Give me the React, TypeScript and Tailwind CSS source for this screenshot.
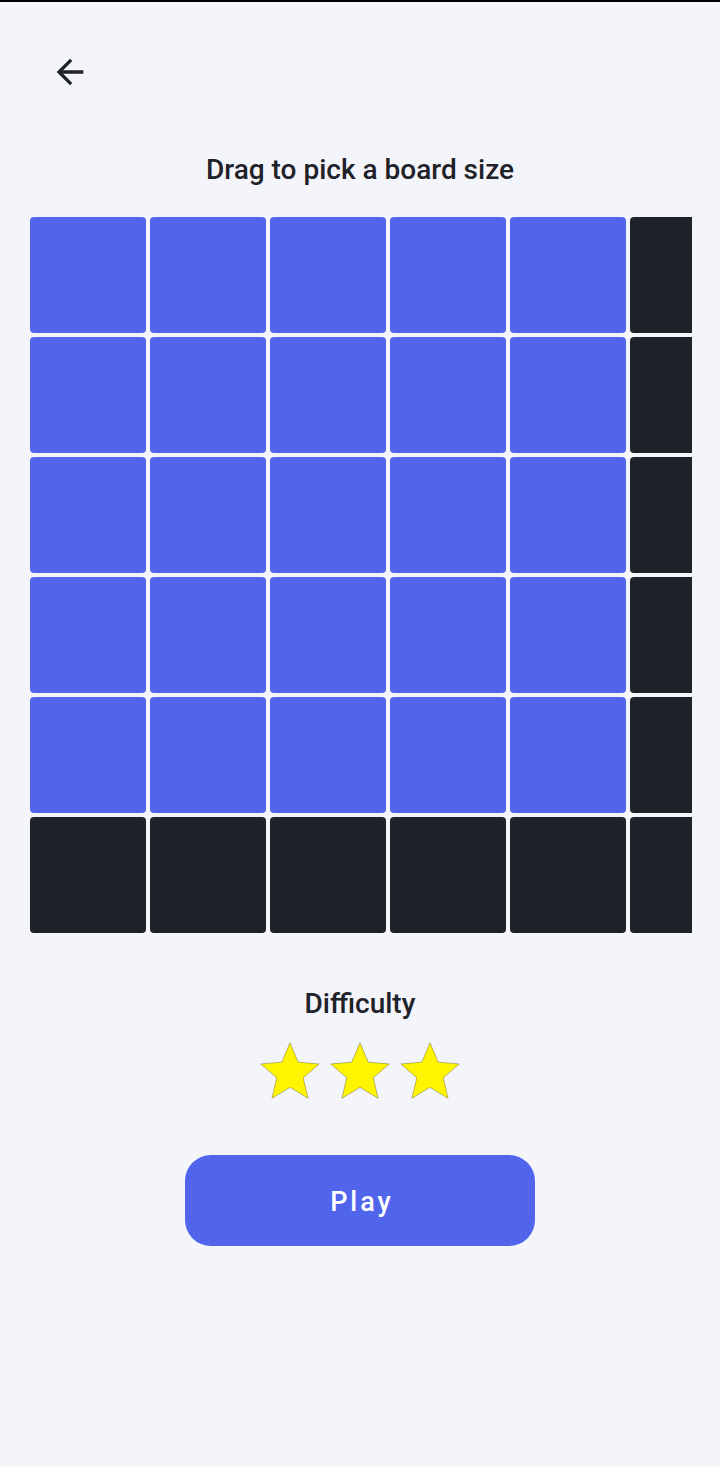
import { useState } from 'react';

const ROWS = 6;
const COLS = 7;

const Star = () => (
  <svg width="70" height="70" viewBox="0 0 24 24">
    <path
      d="M12 17.27L18.18 21l-1.64-7.03L22 9.24l-7.19-.61L12 2 9.19 8.63 2 9.24l5.46 4.73L5.82 21z"
      fill="#fff500"
      stroke="#3a3a1a"
      strokeWidth="0.12"
      strokeLinejoin="round"
    />
  </svg>
);

const App = () => {
  const [size] = useState({ rows: 5, cols: 5 });

  return (
    <div
      className="min-h-[1467px] bg-[#f4f5fa] text-[#1f2229]"
      style={{ fontFamily: 'Roboto, "Liberation Sans", sans-serif' }}
    >
      <div className="h-[2px] bg-black" />

      {/* back button */}
      <div className="pl-[50px] pt-[50px]">
        <button className="block">
          <svg width="40" height="40" viewBox="0 0 24 24" fill="#1f2229">
            <path d="M20 11H7.83l5.59-5.59L12 4l-8 8 8 8 1.41-1.41L7.83 13H20v-2z" />
          </svg>
        </button>
      </div>

      <h1 className="mt-[62px] text-center text-[28px] font-medium leading-[32px]">
        Drag to pick a board size
      </h1>

      {/* board size picker */}
      <div className="mt-[31px] ml-[30px] w-[662px] overflow-hidden">
        <div className="flex w-max flex-col gap-[4px]">
          {Array.from({ length: ROWS }).map((_, r) => (
            <div key={r} className="flex gap-[4px]">
              {Array.from({ length: COLS }).map((_, c) => (
                <div
                  key={c}
                  className={
                    r < size.rows && c < size.cols
                      ? 'h-[116px] w-[116px] rounded-[4px] bg-[#5064ec]'
                      : 'h-[116px] w-[116px] rounded-[4px] bg-[#1f2229]'
                  }
                />
              ))}
            </div>
          ))}
        </div>
      </div>

      <h2 className="mt-[55px] text-center text-[28px] font-medium leading-[32px]">
        Difficulty
      </h2>

      <div className="mt-[17px] flex justify-center">
        <Star />
        <Star />
        <Star />
      </div>

      <div className="mt-[48px] flex justify-center">
        <button className="h-[91px] w-[350px] rounded-[26px] bg-[#5064ec] pt-[3px] pl-[4px] text-[27px] font-medium tracking-[3px] text-white">
          Play
        </button>
      </div>
    </div>
  );
};

export default App;
